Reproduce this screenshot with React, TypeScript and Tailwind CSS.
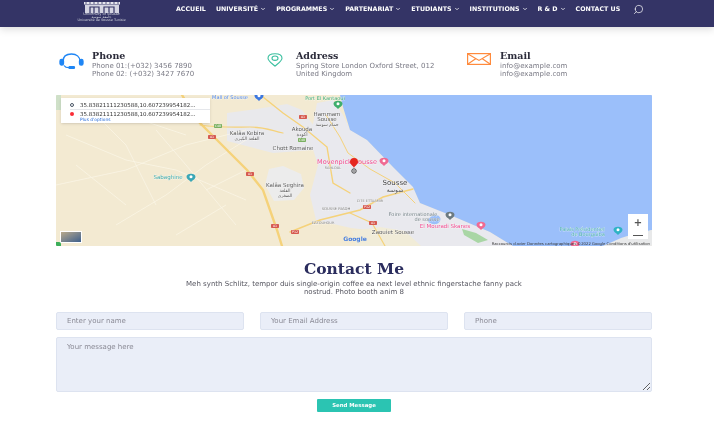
import React from 'react';
import { ChevronDown, Search } from 'lucide-react';

const navItems = [
  { label: 'ACCUEIL', arrow: false },
  { label: 'UNIVERSITÉ', arrow: true },
  { label: 'PROGRAMMES', arrow: true },
  { label: 'PARTENARIAT', arrow: true },
  { label: 'ETUDIANTS', arrow: true },
  { label: 'INSTITUTIONS', arrow: true },
  { label: 'R & D', arrow: true },
  { label: 'CONTACT US', arrow: false },
];

function Logo() {
  return (
    <div className="flex w-[47px] flex-col items-center">
      <svg width="36" height="11" viewBox="0 0 36 11" fill="none">
        <rect x="0" y="0" width="36" height="2.5" fill="#e6e6ee" />
        <path d="M2 0v2M6 0v2M10 0v2M14 0v2M18 0v2M22 0v2M26 0v2M30 0v2M34 0v2" stroke="#343466" strokeWidth="0.8" />
        <rect x="1" y="3" width="34" height="8" fill="#d5d5e2" />
        <path d="M6 11V5h9v6M20 11V5h10v6M10 5v6M25 5v6" stroke="#343466" strokeWidth="1.2" />
      </svg>
      <span className="text-[3.6px] leading-[3px] whitespace-nowrap text-gray-300">University of Sousse</span>
      <span className="text-[3.6px] leading-[3px] whitespace-nowrap text-gray-300">جامعة سوسة</span>
      <span className="text-[3.4px] leading-[3px] whitespace-nowrap text-gray-300">Université de Sousse Tunisie</span>
    </div>
  );
}

function PhoneIcon() {
  return (
    <svg width="25" height="16" viewBox="0 0 25 16" fill="none" stroke="#1f86f5" strokeWidth="1.3">
      <path d="M4 8.500C4 3.500 7.500 1 12.500 1S21 3.500 21 8.500" />
      <rect x="1" y="6.500" width="3.500" height="5.500" rx="1.600" fill="#1f86f5" />
      <rect x="20.500" y="6.500" width="3.500" height="5.500" rx="1.600" fill="#1f86f5" />
      <path d="M5 12.500c1 1.600 3 2.200 5 2.200" />
      <rect x="10" y="13.600" width="5.500" height="1.800" rx="0.800" fill="#1f86f5" />
    </svg>
  );
}

function PinIcon() {
  return (
    <svg width="16" height="14" viewBox="0 0 16 14" fill="none" stroke="#3cc0a0" strokeWidth="1.1">
      <path d="M8 13.200C5 10.500 1 7.800 1 5.200 1 2.400 4 .7 8 .7s7 1.700 7 4.500c0 2.600-4 5.300-7 8z" />
      <ellipse cx="8" cy="5.200" rx="3" ry="2.200" />
    </svg>
  );
}

function MailIcon() {
  return (
    <svg width="24" height="12" viewBox="0 0 24 12" fill="none" stroke="#ff8a3c" strokeWidth="1.200">
      <rect x="0.600" y="0.600" width="22.800" height="10.800" />
      <path d="M1 1l11 6.400L23 1M1 11l8-5.400M23 11l-8-5.400" />
    </svg>
  );
}

const contacts = [
  { title: 'Phone', lines: ['Phone 01:(+032) 3456 7890', 'Phone 02: (+032) 3427 7670'], icon: <PhoneIcon />, iconClass: 'pl-[3px]' },
  { title: 'Address', lines: ['Spring Store London Oxford Street, 012', 'United Kingdom'], icon: <PinIcon />, iconClass: 'pl-[7px]' },
  { title: 'Email', lines: ['info@example.com', 'info@example.com'], icon: <MailIcon />, iconClass: 'pl-[3px]' },
];

// map labels, x/y in map pixels
const labels = [
  { x: 191, y: 40, t: 'Kalâa Kebira', c: '#555', s: 5.5 },
  { x: 191, y: 45, t: 'القلعة الكبرى', c: '#555', s: 4.5 },
  { x: 246, y: 36, t: 'Akouda', c: '#555', s: 5.5 },
  { x: 246, y: 41, t: 'أكودة', c: '#555', s: 5 },
  { x: 237, y: 55, t: 'Chott Romaine', c: '#555', s: 5.5 },
  { x: 271, y: 21, t: 'Hammam', c: '#555', s: 5.5 },
  { x: 271, y: 26, t: 'Sousse', c: '#555', s: 5.5 },
  { x: 271, y: 31, t: 'حمام سوسة', c: '#555', s: 4.5 },
  { x: 229, y: 92, t: 'Kalâa Seghira', c: '#555', s: 5.5 },
  { x: 229, y: 97, t: 'القلعة', c: '#555', s: 4.5 },
  { x: 229, y: 102, t: 'الصغرى', c: '#555', s: 4.5 },
  { x: 112, y: 84, t: 'Sabaghine', c: '#3aa7a7', s: 5.5 },
  { x: 291, y: 69, t: 'Movenpick Sousse', c: '#f0468c', s: 6.5 },
  { x: 277, y: 74, t: 'SAHLOUL', c: '#777', s: 3.5 },
  { x: 280, y: 115, t: 'SOUSSE RIADH', c: '#777', s: 3.8 },
  { x: 267, y: 129, t: 'EZZOUHOUR', c: '#777', s: 3.5 },
  { x: 339, y: 90, t: 'Sousse', c: '#444', s: 7 },
  { x: 339, y: 97, t: 'سوسة', c: '#444', s: 6 },
  { x: 314, y: 107, t: 'CITE ETTAAMIR', c: '#777', s: 3.5 },
  { x: 357, y: 121, t: 'Foire internationale', c: '#6c7a80', s: 5 },
  { x: 371, y: 126, t: 'de sousse', c: '#6c7a80', s: 5 },
  { x: 389, y: 133, t: 'El Mouradi Skanes', c: '#f0468c', s: 5.5 },
  { x: 337, y: 139, t: 'Zaouiet Sousse', c: '#555', s: 5.5 },
  { x: 526, y: 136, t: 'Palais Présidentiel', c: '#3aa7a7', s: 5 },
  { x: 532, y: 141, t: 'de Bourguiba', c: '#3aa7a7', s: 5 },
  { x: 269, y: 5, t: 'Port El Kantaoui', c: '#3aa66a', s: 5 },
  { x: 174, y: 4, t: 'Mall of Sousse', c: '#4a80e0', s: 5 },
];

const shields = [
  [156, 42, 'A1'], [194, 79, 'A1'], [219, 131, 'A1'], [239, 137, 'P12'], [247, 22, 'A1'], [311, 112, 'P12'], [317, 128, 'A1'], [162, 31, 'C48'], [246, 45, 'C48'],
] as const;

// teardrop pois, tip at the bottom
const pois = [
  [135, 82, '#3aa7b7'], [282, 9, '#3fae6c'], [328, 66, '#f06a92'], [394, 120, '#6c7a80'], [425, 130, '#f06a92'], [562, 135, '#2eb3c4'], [519, 149, '#f06a92'], [203, 1, '#3d78e0'],
] as const;

function MapDrawing() {
  return (
    <svg className="block h-full w-full" viewBox="0 0 596 151" fontFamily="'DejaVu Sans', sans-serif">
      <rect width="596" height="151" fill="#f3ead2" />
      {/* built-up areas */}
      <path d="M171 18l30-4 30-5 15 6 15 20-4 20-40 3-46-12z" fill="#e9e9ec" />
      <path d="M213 74l14-3 18 8 3 14-10 12-20 1-9-16z" fill="#ececec" />
      <path d="M261 8l16-3 10 15 7 15 17 10 26 27 20 20 7 16 30 12 40 17 23 14H340l-20-15-25-3-35-8-6-25 8-30-8-25z" fill="#e9e9ee" />
      <path d="M296 136l28-4 25 4 16 15h-65z" fill="#f1ecd8" />
      <path d="M0 0h5v15H0z" fill="#cfe0c8" />
      {/* faint tracks */}
      <g stroke="#faf6e8" strokeWidth="0.7" fill="none">
        <path d="M10 40l60 25 50 10 70 30M30 10l40 40 30 60M0 90l70-15 60-25 60-15M60 130l50-30 40-30 40-25M100 35l30 35 50 60" />
        <path d="M20 70l50 40M150 95l40-20M120 140l50-30M70 20l60 20" />
      </g>
      {/* roads */}
      <g stroke="#f5d27a" fill="none" strokeLinecap="round">
        <path d="M126 0l15 25 23 23 27 27 16 20 14 40 5 16" strokeWidth="2.400" />
        <path d="M144 30c20 3 35 2 50 2s20 3 33 6" strokeWidth="1.200" />
        <path d="M207 2l20 16 20 14 24 20 6 36 17 10" strokeWidth="1.400" />
        <path d="M234 137l30-12 40-10 23-13 30-8" strokeWidth="1.500" />
        <path d="M294 118l22 10 13 23" strokeWidth="1.200" />
        <path d="M270 20l14 22 8 16 22 16 25 14 20 20" strokeWidth="1" />
      </g>
      {/* sea */}
      <path d="M284 0l3 12 7 23 17 10 26 27 20 20 7 16 30 12 40 17 23 14H547L596 135V0z" fill="#9bbffa" />
      <path d="M547 151l18-8 16-5 15-3v16z" fill="#e8e9ea" />
      <path d="M376 121c5-3 10 1 8 5s-6 4-10 2-1-5 2-7z" fill="#9bbffa" />
      <path d="M406 134l14 4 12 7-10 3-14-8z" fill="#a9d6a5" />
      {/* labels */}
      {labels.map((l) => (
        <text key={l.t} x={l.x} y={l.y} fontSize={l.s} fill={l.c} textAnchor="middle" stroke="#ffffff" strokeWidth="0.3" paintOrder="stroke">
          {l.t}
        </text>
      ))}
      {shields.map(([x, y, t]) => (
        <g key={`${x}-${y}`}>
          <rect x={x - 4} y={y - 2} width="8" height="4" rx="0.800" fill={t === 'C48' ? '#7ab060' : '#d65a50'} />
          <text x={x} y={y + 1.200} fontSize="3.200" fill="#fff" textAnchor="middle">{t}</text>
        </g>
      ))}
      {pois.map(([x, y, c]) => (
        <g key={`${x}-${y}`}>
          <path d={`M${x} ${y + 5}c-2-2-4.500-3-4.500-5.200 0-2 2-3 4.500-3s4.500 1 4.500 3c0 2.200-2.500 3.200-4.500 5.200z`} fill={c} />
          <circle cx={x} cy={y - 0.200} r="1.500" fill="#ffffff" />
        </g>
      ))}
      {/* route pin */}
      <path d="M298 63c-3 0-4 2-4 3.800 0 2.800 3 3.700 4 6.200 1-2.500 4-3.400 4-6.200 0-1.800-1-3.800-4-3.800z" fill="#e5261f" />
      <circle cx="298" cy="76" r="2.200" fill="none" stroke="#444" strokeWidth="1" />
      <circle cx="298" cy="76" r="0.800" fill="#444" />
      {/* attribution */}
      <text x="594" y="150" fontSize="3.800" fill="#333" textAnchor="end">Raccourcis clavier   Données cartographiques ©2022 Google   Conditions d'utilisation</text>
      <text x="299" y="146" fontSize="6" fill="#4a80e0" textAnchor="middle" fontWeight="700">Google</text>
    </svg>
  );
}

function DirectionsCard() {
  return (
    <div className="absolute left-[5px] top-[3px] h-[25px] w-[149px] bg-white pl-[9px] pt-[3px] text-[5.500px] leading-[8px] whitespace-nowrap text-[#333] shadow-sm">
      <div className="flex items-center gap-[6px]">
        <span className="h-[4px] w-[4px] rounded-full border border-gray-600" />
        <span>35.83821111230588,10.607239954182...</span>
      </div>
      <div className="flex items-center gap-[6px] border-t border-gray-200">
        <span className="h-[4px] w-[4px] rounded-full bg-red-500" />
        <span>35.83821111230588,10.607239954182...</span>
      </div>
      <div className="pl-[10px] text-[4.400px] leading-[3px] text-[#2a6fdb]">Plus d'options</div>
    </div>
  );
}

export default function App() {
  return (
    <div className="h-[424px] w-[714px] overflow-hidden bg-white blur-[0.4px] [font-family:'DejaVu_Sans',sans-serif]">
      <header className="flex h-[27px] items-start bg-[#343466] pl-[78px] shadow-[0_2px_8px_rgba(0,0,0,0.15)]">
        <div className="pt-[2px]">
          <Logo />
        </div>
        <nav className="ml-[51px] flex h-[18px] items-center gap-[10px]">
          {navItems.map((item) => (
            <span key={item.label} className="flex items-center gap-[2px] text-[6.300px] font-bold whitespace-nowrap text-white">
              {item.label}
              {item.arrow && <ChevronDown className="h-[6px] w-[6px]" strokeWidth={3} />}
            </span>
          ))}
          <Search className="ml-[3px] h-[11px] w-[11px] -scale-x-100 text-white" strokeWidth={1.5} />
        </nav>
      </header>

      <main className="pr-[62px] pl-[56px]">
        <section className="grid grid-cols-3 gap-4 pt-[23px]">
          {contacts.map((c) => (
            <div key={c.title} className="flex">
              <div className={`w-[36px] shrink-0 pt-[3px] ${c.iconClass}`}>{c.icon}</div>
              <div>
                <h3 className="text-[9.500px] leading-[12px] font-bold text-[#2b2b3a] [font-family:'DejaVu_Serif',serif]">{c.title}</h3>
                {c.lines.map((line, i) => (
                  <p key={i} className="text-[7px] leading-[8px] whitespace-nowrap text-[#7a7a85]">{line}</p>
                ))}
              </div>
            </div>
          ))}
        </section>

        <section className="relative mt-[17px] h-[151px] overflow-hidden rounded-[1px]">
          <MapDrawing />
          <DirectionsCard />
          <div className="absolute bottom-[3px] left-[4px] h-[12px] w-[22px] border border-white bg-gradient-to-br from-[#b9a98a] to-[#3e5f8a]" />
          <div className="absolute bottom-0 left-0 h-[4px] w-[5px] rounded-tr-[2px] bg-[#3cae5a]" />
          <div className="absolute right-[4px] bottom-[7px] flex h-[25px] w-[20px] flex-col items-center justify-around bg-white text-[#555]">
            <span className="text-[10px] leading-none font-bold">+</span>
            <span className="h-[1px] w-[10px] bg-[#555]" />
          </div>
        </section>

        <section className="pt-[14px] text-center">
          <h2 className="text-[15.500px] leading-[18px] font-bold text-[#2b2d5e] [font-family:'DejaVu_Serif',serif]">Contact Me</h2>
          <p className="mx-auto mt-[2px] w-[350px] text-[7px] leading-[8px] text-[#55555f]">
            Meh synth Schlitz, tempor duis single-origin coffee ea next level ethnic fingerstache fanny pack nostrud. Photo booth anim 8
          </p>
        </section>

        <form className="pt-[16px]">
          <div className="grid grid-cols-3 gap-4">
            <input placeholder="Enter your name" className="h-[18px] rounded-[2px] border border-[#dde3f0] bg-[#eaeef8] px-[10px] text-[7px] outline-none placeholder:text-[#8a8a95]" />
            <input placeholder="Your Email Address" className="h-[18px] rounded-[2px] border border-[#dde3f0] bg-[#eaeef8] px-[10px] text-[7px] outline-none placeholder:text-[#8a8a95]" />
            <input placeholder="Phone" className="h-[18px] rounded-[2px] border border-[#dde3f0] bg-[#eaeef8] px-[10px] text-[7px] outline-none placeholder:text-[#8a8a95]" />
          </div>
          <textarea placeholder="Your message here" className="mt-[7px] block h-[55px] w-full rounded-[2px] border border-[#dde3f0] bg-[#eaeef8] px-[10px] py-[4px] text-[7px] outline-none placeholder:text-[#8a8a95]" />
          <div className="mt-[7px] flex justify-center">
            <button type="button" className="h-[13px] w-[74px] rounded-[1px] bg-[#2bc4b2] text-[5.400px] font-bold text-white">Send Message</button>
          </div>
        </form>
      </main>
    </div>
  );
}
